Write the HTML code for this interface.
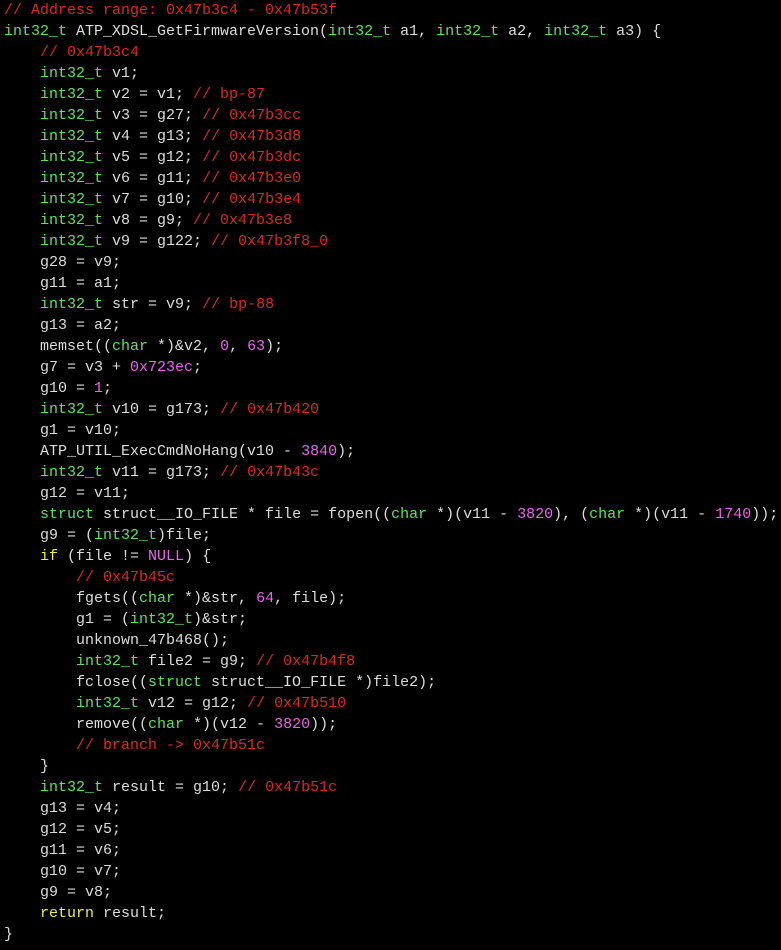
<!DOCTYPE html>
<html><head><meta charset="utf-8"><style>
html,body{margin:0;padding:0;background:#000;width:781px;height:950px;overflow:hidden}
pre{margin:0;padding:0 0 0 4px;font-family:"Liberation Mono",monospace;font-size:15px;line-height:21px;color:#dcdcdc;white-space:pre}
.t{color:#5ee35e}.k{color:#f0f030}.c{color:#dd2a1b}.n{color:#f060f0}
</style></head><body><pre><span class="c">// Address range: 0x47b3c4 - 0x47b53f</span>
<span class="t">int32_t</span> ATP_XDSL_GetFirmwareVersion(<span class="t">int32_t</span> a1, <span class="t">int32_t</span> a2, <span class="t">int32_t</span> a3) {
    <span class="c">// 0x47b3c4</span>
    <span class="t">int32_t</span> v1;
    <span class="t">int32_t</span> v2 = v1; <span class="c">// bp-87</span>
    <span class="t">int32_t</span> v3 = g27; <span class="c">// 0x47b3cc</span>
    <span class="t">int32_t</span> v4 = g13; <span class="c">// 0x47b3d8</span>
    <span class="t">int32_t</span> v5 = g12; <span class="c">// 0x47b3dc</span>
    <span class="t">int32_t</span> v6 = g11; <span class="c">// 0x47b3e0</span>
    <span class="t">int32_t</span> v7 = g10; <span class="c">// 0x47b3e4</span>
    <span class="t">int32_t</span> v8 = g9; <span class="c">// 0x47b3e8</span>
    <span class="t">int32_t</span> v9 = g122; <span class="c">// 0x47b3f8_0</span>
    g28 = v9;
    g11 = a1;
    <span class="t">int32_t</span> str = v9; <span class="c">// bp-88</span>
    g13 = a2;
    memset((<span class="t">char</span> *)&amp;v2, <span class="n">0</span>, <span class="n">63</span>);
    g7 = v3 + <span class="n">0x723ec</span>;
    g10 = <span class="n">1</span>;
    <span class="t">int32_t</span> v10 = g173; <span class="c">// 0x47b420</span>
    g1 = v10;
    ATP_UTIL_ExecCmdNoHang(v10 - <span class="n">3840</span>);
    <span class="t">int32_t</span> v11 = g173; <span class="c">// 0x47b43c</span>
    g12 = v11;
    <span class="t">struct</span> struct__IO_FILE * file = fopen((<span class="t">char</span> *)(v11 - <span class="n">3820</span>), (<span class="t">char</span> *)(v11 - <span class="n">1740</span>));
    g9 = (<span class="t">int32_t</span>)file;
    <span class="k">if</span> (file != <span class="n">NULL</span>) {
        <span class="c">// 0x47b45c</span>
        fgets((<span class="t">char</span> *)&amp;str, <span class="n">64</span>, file);
        g1 = (<span class="t">int32_t</span>)&amp;str;
        unknown_47b468();
        <span class="t">int32_t</span> file2 = g9; <span class="c">// 0x47b4f8</span>
        fclose((<span class="t">struct</span> struct__IO_FILE *)file2);
        <span class="t">int32_t</span> v12 = g12; <span class="c">// 0x47b510</span>
        remove((<span class="t">char</span> *)(v12 - <span class="n">3820</span>));
        <span class="c">// branch -&gt; 0x47b51c</span>
    }
    <span class="t">int32_t</span> result = g10; <span class="c">// 0x47b51c</span>
    g13 = v4;
    g12 = v5;
    g11 = v6;
    g10 = v7;
    g9 = v8;
    <span class="k">return</span> result;
}</pre></body></html>
